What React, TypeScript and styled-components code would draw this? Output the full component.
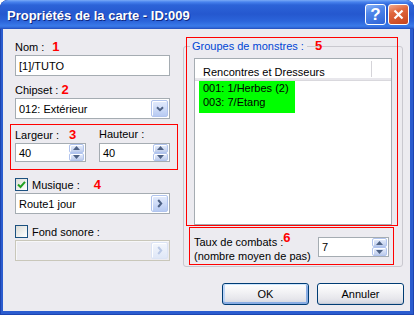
import styled, { createGlobalStyle } from 'styled-components';

const GlobalStyle = createGlobalStyle`
  html, body {
    margin: 0;
    padding: 0;
    background: #ffffff;
  }
  body {
    font-family: "Liberation Sans", Arial, sans-serif;
    font-size: 11px;
    color: #000000;
  }
  * {
    box-sizing: border-box;
  }
`;

const Window = styled.div`
  width: 414px;
  height: 315px;
  display: flex;
  flex-direction: column;
  background: #2b5ccf;
  border-radius: 8px 8px 0 0;
  overflow: hidden;
  box-shadow: inset 1px 0 #1d44b0, inset -1px 0 #1d44b0, inset 0 -1px #1d44b0;
`;

const TitleBar = styled.div`
  flex: none;
  height: 29px;
  display: flex;
  align-items: center;
  padding: 0 5px 0 7px;
  border-radius: 8px 8px 0 0;
  background: linear-gradient(
    180deg,
    #7aaaf6 0px,
    #4883ee 2px,
    #2c63d8 5px,
    #2558cf 14px,
    #2b64da 21px,
    #3a7ae9 26px,
    #2e62d2 28px,
    #1f4ab9 29px
  );
`;

const Title = styled.div`
  flex: 1;
  padding-top: 1px;
  font: bold 13px "Liberation Sans", Arial, sans-serif;
  color: #ffffff;
  text-shadow: 1px 1px 0 #0f2780;
  white-space: nowrap;
`;

const TitleButton = styled.div<{ $kind: 'help' | 'close' }>`
  width: 21px;
  height: 21px;
  margin-left: 2px;
  display: flex;
  align-items: center;
  justify-content: center;
  border: 1px solid #ffffff;
  border-radius: 3px;
  color: #ffffff;
  font: bold 17px "Liberation Sans", Arial, sans-serif;
  background: ${(p) =>
    p.$kind === 'help'
      ? 'linear-gradient(160deg, #8db5f7 0%, #4f86ea 35%, #2f63d6 100%)'
      : 'linear-gradient(160deg, #f2ab90 0%, #e0683f 35%, #c7431c 100%)'};
`;

const Client = styled.div`
  flex: 1;
  margin: 0 4px 4px 3px;
  background: #ecebf0;
  display: flex;
  flex-direction: column;
`;

const Main = styled.div`
  display: flex;
  align-items: flex-start;
  gap: 13px;
  padding: 8px 0 0 12px;
`;

const LeftColumn = styled.div`
  width: 155px;
  flex: none;
  display: flex;
  flex-direction: column;
  padding-top: 3px;
`;

const FieldLabel = styled.div<{ $top?: number }>`
  height: 13px;
  line-height: 13px;
  margin-top: ${(p) => p.$top ?? 0}px;
  margin-bottom: 2px;
  white-space: nowrap;
`;

const Mark = styled.span<{ $gap: number; $raise?: number }>`
  margin-left: ${(p) => p.$gap}px;
  color: #ff0000;
  font-weight: bold;
  font-size: 13px;
  vertical-align: ${(p) => p.$raise ?? 0}px;
`;

const TextBox = styled.div<{ $disabled?: boolean }>`
  height: 21px;
  display: flex;
  align-items: center;
  padding: 0 1px 0 3px;
  border: 1px solid ${(p) => (p.$disabled ? '#c9c7ba' : '#a5acb2')};
  background: ${(p) => (p.$disabled ? '#ecebf0' : '#ffffff')};
  box-shadow: ${(p) => (p.$disabled ? 'inset 1px 1px 0 #f7f7f9' : 'none')};
`;

const BoxText = styled.span`
  flex: 1;
  white-space: nowrap;
`;

const SideButton = styled.div<{ $disabled?: boolean }>`
  width: 17px;
  height: 17px;
  display: flex;
  align-items: center;
  justify-content: center;
  border: 1px solid ${(p) => (p.$disabled ? '#dbe4f5' : '#b1c4ee')};
  border-radius: 2px;
  box-shadow: inset 1px 1px 0 #ffffff;
  color: ${(p) => (p.$disabled ? '#b9c8e6' : '#4d6185')};
  background: ${(p) =>
    p.$disabled
      ? 'linear-gradient(180deg, #f3f6fc 0%, #dfe7f7 100%)'
      : 'linear-gradient(180deg, #e3ebfc 0%, #cfdcf8 50%, #b7caf2 100%)'};
`;

const SizeBox = styled.div`
  margin: 5px -8px 0 -5px;
  padding: 3px 7px 7px 4px;
  border: 1px solid #ff0000;
  display: flex;
  gap: 13px;
`;

const SizeField = styled.div`
  width: 71px;
  display: flex;
  flex-direction: column;
`;

const SpinBox = styled.div<{ $h: number }>`
  width: 71px;
  height: ${(p) => p.$h}px;
  display: flex;
  align-items: stretch;
  border: 1px solid #a5acb2;
  background: #ffffff;
`;

const SpinValue = styled.div`
  flex: 1;
  display: flex;
  align-items: center;
  padding-left: 3px;
`;

const SpinButtons = styled.div`
  width: 15px;
  margin-right: 1px;
  display: flex;
  flex-direction: column;
`;

const SpinButton = styled.div`
  flex: 1;
  display: flex;
  align-items: center;
  justify-content: center;
  border: 1px solid #b1c4ee;
  border-radius: 2px;
  box-shadow: inset 1px 1px 0 #ffffff;
  color: #4d6185;
  background: linear-gradient(180deg, #e6edfb 0%, #cfdaf3 60%, #bccbea 100%);
`;

const CheckRow = styled.div<{ $top: number }>`
  height: 13px;
  margin-top: ${(p) => p.$top}px;
  margin-bottom: 2px;
  display: flex;
  align-items: center;
  gap: 4px;
  white-space: nowrap;
`;

const CheckBox = styled.div`
  width: 13px;
  height: 13px;
  flex: none;
  display: flex;
  align-items: center;
  justify-content: center;
  border: 1px solid #1c5180;
  background: linear-gradient(135deg, #dcdcd7 0%, #ffffff 100%);
`;

const GroupBox = styled.div`
  width: 220px;
  flex: none;
  margin-top: 9px;
  padding: 0 4px 1px 2px;
  border: 1px solid #c9c8cf;
  border-radius: 3px;
`;

const MonsterBox = styled.div`
  margin-top: -10px;
  padding: 1px 5px 0 7px;
  border: 1px solid #ff0000;
  display: flex;
  flex-direction: column;
`;

const LegendRow = styled.div`
  height: 13px;
  line-height: 13px;
  margin-left: -4px;
  white-space: nowrap;
`;

const Legend = styled.span`
  padding: 0 3px 0 2px;
  background: #ecebf0;
  color: #0046d5;
`;

const ListView = styled.div`
  height: 167px;
  margin-top: 6px;
  border: 1px solid #a5acb2;
  background: #ffffff;
  display: flex;
  flex-direction: column;
`;

const ListHeader = styled.div`
  height: 21px;
  display: flex;
  border-bottom: 2px solid #e8e7ec;
  box-shadow: 0 1px 0 #d9d8dd;
`;

const HeaderCell = styled.div<{ $width?: number }>`
  ${(p) => (p.$width ? `width: ${p.$width}px;` : 'flex: 1;')}
  padding: 4px 0 0 8px;
  line-height: 14px;
  white-space: nowrap;
  border-right: ${(p) => (p.$width ? '1px solid #d5d4d9' : 'none')};
  margin: 2px 0 1px;
`;

const Selection = styled.div`
  width: 96px;
  margin: 1px 0 0 4px;
  padding: 0 0 4px 4px;
  background: #00ff00;
  line-height: 14px;
  white-space: nowrap;
`;

const RateBox = styled.div`
  margin: 1px 4px 0 3px;
  padding: 3px 4px 1px 4px;
  border: 1px solid #ff0000;
  display: flex;
  align-items: center;
  justify-content: space-between;
`;

const RateText = styled.div`
  line-height: 14px;
  white-space: nowrap;
`;

const Footer = styled.div`
  display: flex;
  justify-content: flex-end;
  gap: 8px;
  margin-top: 16px;
  padding-right: 6px;
`;

const DialogButton = styled.button<{ $default?: boolean }>`
  width: 87px;
  height: 22px;
  padding: 0;
  font: 11px "Liberation Sans", Arial, sans-serif;
  color: #000000;
  border: 1px solid #003c74;
  border-radius: 3px;
  background: linear-gradient(180deg, #ffffff 0%, #f4f4f6 35%, #e6e6eb 75%, #cfd4df 100%);
  box-shadow: ${(p) =>
    p.$default
      ? 'inset 0 1px 0 #cee7ff, inset 0 -2px 0 #89ade4, inset 2px 0 0 #bcd4f6, inset -2px 0 0 #89ade4'
      : 'inset 0 -1px 0 #c4c9d6'};
`;

const Chevron = () => (
  <svg width="8" height="6" viewBox="0 0 8 6">
    <path d="M1 1.2 L4 4.2 L7 1.2" fill="none" stroke="currentColor" strokeWidth="2" />
  </svg>
);

const ArrowRight = () => (
  <svg width="6" height="9" viewBox="0 0 6 9">
    <path d="M1.2 1 L4.2 4.5 L1.2 8" fill="none" stroke="currentColor" strokeWidth="2" />
  </svg>
);

const SpinArrow = ({ up }: { up?: boolean }) => (
  <svg width="7" height="4" viewBox="0 0 7 4">
    <path d={up ? 'M0 4 L3.5 0 L7 4 Z' : 'M0 0 L3.5 4 L7 0 Z'} fill="currentColor" />
  </svg>
);

const Spinner = ({ value, h }: { value: string; h: number }) => (
  <SpinBox $h={h}>
    <SpinValue>{value}</SpinValue>
    <SpinButtons>
      <SpinButton>
        <SpinArrow up />
      </SpinButton>
      <SpinButton>
        <SpinArrow />
      </SpinButton>
    </SpinButtons>
  </SpinBox>
);

export default function App() {
  return (
    <>
      <GlobalStyle />
      <Window>
        <TitleBar>
          <Title>Propriétés de la carte - ID:009</Title>
          <TitleButton $kind="help">?</TitleButton>
          <TitleButton $kind="close">
            <svg width="11" height="11" viewBox="0 0 11 11">
              <path d="M1.5 1.5 L9.5 9.5 M9.5 1.5 L1.5 9.5" stroke="#ffffff" strokeWidth="2.2" />
            </svg>
          </TitleButton>
        </TitleBar>

        <Client>
          <Main>
            <LeftColumn>
              <FieldLabel>
                Nom :<Mark $gap={8}>1</Mark>
              </FieldLabel>
              <TextBox>
                <BoxText>[1]/TUTO</BoxText>
              </TextBox>

              <FieldLabel $top={7}>
                Chipset :<Mark $gap={3}>2</Mark>
              </FieldLabel>
              <TextBox>
                <BoxText>012: Extérieur</BoxText>
                <SideButton>
                  <Chevron />
                </SideButton>
              </TextBox>

              <SizeBox>
                <SizeField>
                  <FieldLabel>
                    Largeur :<Mark $gap={10}>3</Mark>
                  </FieldLabel>
                  <Spinner value="40" h={19} />
                </SizeField>
                <SizeField>
                  <FieldLabel>Hauteur :</FieldLabel>
                  <Spinner value="40" h={19} />
                </SizeField>
              </SizeBox>

              <CheckRow $top={8}>
                <CheckBox>
                  <svg width="9" height="9" viewBox="0 0 9 9">
                    <path d="M1 4.5 L3.5 7 L8 1.8" fill="none" stroke="#21a121" strokeWidth="2" />
                  </svg>
                </CheckBox>
                <span>
                  Musique :<Mark $gap={14}>4</Mark>
                </span>
              </CheckRow>
              <TextBox>
                <BoxText>Route1 jour</BoxText>
                <SideButton>
                  <ArrowRight />
                </SideButton>
              </TextBox>

              <CheckRow $top={11}>
                <CheckBox />
                <span>Fond sonore :</span>
              </CheckRow>
              <TextBox $disabled>
                <BoxText />
                <SideButton $disabled>
                  <ArrowRight />
                </SideButton>
              </TextBox>
            </LeftColumn>

            <GroupBox>
              <MonsterBox>
                <LegendRow>
                  <Legend>Groupes de monstres :</Legend>
                  <Mark $gap={8}>5</Mark>
                </LegendRow>
                <ListView>
                  <ListHeader>
                    <HeaderCell $width={177}>Rencontres et Dresseurs</HeaderCell>
                    <HeaderCell />
                  </ListHeader>
                  <Selection>
                    <div>001: 1/Herbes (2)</div>
                    <div>003: 7/Etang</div>
                  </Selection>
                </ListView>
              </MonsterBox>

              <RateBox>
                <RateText>
                  Taux de combats :<Mark $gap={0} $raise={4}>6</Mark>
                  <br />
                  (nombre moyen de pas)
                </RateText>
                <Spinner value="7" h={20} />
              </RateBox>
            </GroupBox>
          </Main>

          <Footer>
            <DialogButton $default>OK</DialogButton>
            <DialogButton>Annuler</DialogButton>
          </Footer>
        </Client>
      </Window>
    </>
  );
}
